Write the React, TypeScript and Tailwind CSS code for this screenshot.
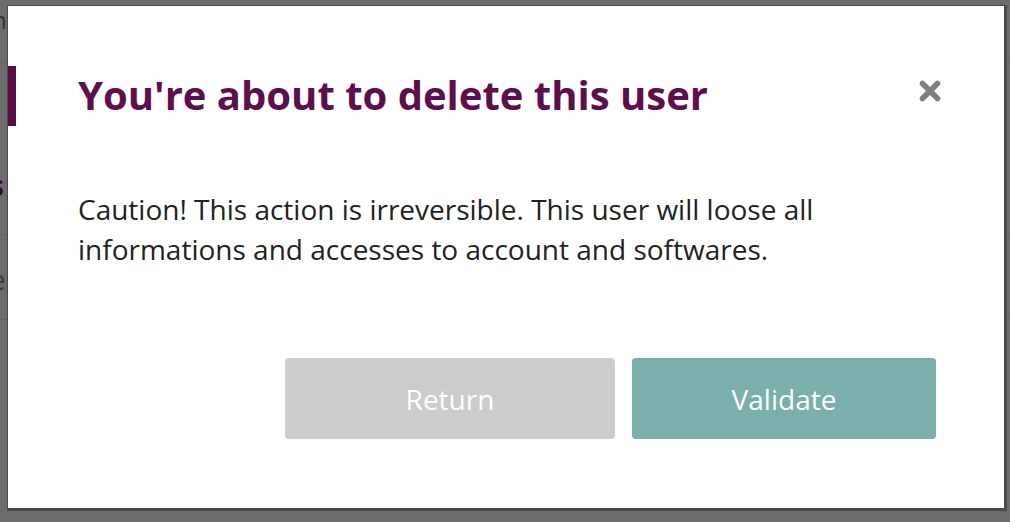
import { X } from "lucide-react";

const PageBehind = () => (
  <div className="flex h-full w-full flex-col bg-[#6c6c6c] text-[#3a3a3a]">
    <div className="-ml-[8px] h-[63px] border-b border-[#626262] pt-[6px] text-[24px] leading-[28px]">
      <span className="text-[#2e2e2e]">n</span>
    </div>
    <div className="flex h-[172px] flex-col border-b border-[#626262]">
      <div className="mt-[106px] -ml-[10px] text-[28px] font-bold leading-[32px] text-[#3d0833]">s</div>
    </div>
    <div className="-ml-[10px] h-[85px] border-b border-[#626262] pt-[28px] text-[28px] leading-[32px] text-[#3a3a3a]">e</div>
    <div className="flex-1" />
  </div>
);

export default function App() {
  return (
    <div
      className="relative h-[522px] w-full overflow-hidden"
      style={{ fontFamily: '"Open Sans", "Noto Sans", sans-serif' }}
    >
      <PageBehind />
      <div className="absolute inset-0 pl-[8px] pt-[6px]">
        <div className="flex h-[502px] w-[996px] flex-col bg-white pl-[70px] pr-[68px] shadow-[1px_1px_0_2px_#4a4a4a]">
          <div className="flex items-start justify-between pt-[64px]">
            <h2 className="text-[40px] font-bold leading-[50px] text-[#5e0e4d]">You're about to delete this user</h2>
            <button className="mr-[-9px] mt-[6px] text-[#7f7f7f]" aria-label="Close">
              <X size={30} strokeWidth={4.5} />
            </button>
          </div>
          <p className="mt-[69px] text-[28px] leading-[40px] text-[#222222]">
            Caution! This action is irreversible. This user will loose all
            <br />
            informations and accesses to account and softwares.
          </p>
          <div className="mt-auto mb-[69px] flex justify-end gap-[17px]">
            <button className="h-[81px] w-[330px] rounded-[4px] bg-[#cccccc] text-[28px] text-white">Return</button>
            <button className="h-[81px] w-[304px] rounded-[4px] bg-[#7aafab] text-[28px] text-white">Validate</button>
          </div>
        </div>
      </div>
      {/* page accent bar that sits above the overlay */}
      <div className="absolute left-[8px] top-[66px] h-[60px] w-[8px] bg-[#5a0d49]" />
    </div>
  );
}
